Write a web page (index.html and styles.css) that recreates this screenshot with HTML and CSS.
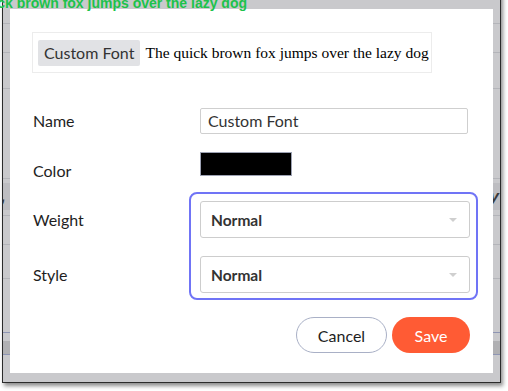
FILE: index.html
```html
<!DOCTYPE html>
<html>
<head>
<meta charset="utf-8">
<link rel="stylesheet" href="styles.css">
</head>
<body>
<div class="banner">quick brown fox jumps over the lazy dog</div>
<div class="frame">
  <div class="page">
    <div class="prow r1"></div>
    <div class="prow r2"></div>
    <div class="prow r3"></div>
    <div class="prow r4"></div>
    <div class="pgap g4"></div>
    <div class="pblock b1"><span class="pcomma">,</span><span class="py">y</span></div>
    <div class="prow r5"></div>
    <div class="prow r6"></div>
    <div class="prow r7"></div>
    <div class="prow r8 blue"></div>
    <div class="pgap g8"></div>
    <div class="pblock b2"></div>
    <div class="prow r9 blue"></div>
  </div>
  <div class="modal">
    <div class="preview">
      <span class="chip">Custom Font</span>
      <span class="sample">The quick brown fox jumps over the lazy dog</span>
    </div>
    <div class="form">
      <div class="row name-row">
        <label class="label">Name</label>
        <div class="input">Custom Font</div>
      </div>
      <div class="row color-row">
        <label class="label color-label">Color</label>
        <div class="swatch"></div>
      </div>
      <div class="group">
        <div class="group-labels">
          <label class="label glabel">Weight</label>
          <label class="label glabel">Style</label>
        </div>
        <div class="ring">
          <div class="select"><span>Normal</span><span class="caret"></span></div>
          <div class="select"><span>Normal</span><span class="caret"></span></div>
        </div>
      </div>
      <div class="actions">
        <button class="btn cancel">Cancel</button>
        <button class="btn save">Save</button>
      </div>
    </div>
  </div>
</div>
</body>
</html>
```
FILE: styles.css
```css
html, body {
  margin: 0;
  padding: 0;
  background: #ffffff;
  overflow: hidden;
  width: 508px;
  height: 391px;
}

.banner {
  position: absolute;
  top: -4px;
  left: -200px;
  width: 447px;
  text-align: right;
  white-space: nowrap;
  font-family: "Liberation Sans", Arial, sans-serif;
  font-weight: bold;
  font-size: 14px;
  line-height: 14px;
  color: #1cc24b;
  z-index: 5;
}

.frame {
  position: relative;
  margin-left: 2px;
  margin-top: -10px;
  width: 497px;
  height: 391px;
  border: 1px solid #2b2b2b;
  background: #c9c9cc;
  box-shadow: 2px 3px 4px rgba(0, 0, 0, 0.45);
  overflow: hidden;
}

.page {
  display: flex;
  flex-direction: column;
}

.prow {
  border-bottom: 1px solid #b3b4b9;
}
.prow.blue { border-bottom-color: #8e95b3; }
.r1 { height: 32px; }
.r2 { height: 28px; }
.r3 { height: 35px; }
.r4 { height: 89px; }
.g4 { height: 4px; }
.pblock {
  display: flex;
  justify-content: space-between;
  align-items: center;
  font-family: "Liberation Sans", Arial, sans-serif;
  font-weight: bold;
  font-style: italic;
  font-size: 17px;
  color: #3a3a3a;
  padding: 0 1px 0 0;
}
.b1 { height: 27px; background: #bdbdc1; }
.pcomma { margin-left: -2px; }
.r5 { height: 5px; }
.r6 { height: 28px; }
.r7 { height: 33px; }
.r8 { height: 53px; }
.g8 { height: 8px; }
.b2 { height: 13px; background: #b0b0b3; }
.r9 { height: 0; }

.modal {
  position: absolute;
  left: 7px;
  top: 18px;
  width: 483px;
  height: 364px;
  background: #ffffff;
  box-sizing: border-box;
  padding: 23px 23px 0 22px;
  font-family: Lato, "Open Sans", sans-serif;
  color: #222;
}

.preview {
  width: 400px;
  height: 41px;
  box-sizing: border-box;
  border: 1px solid #ececec;
  display: flex;
  align-items: center;
  padding: 0 5px;
  white-space: nowrap;
  overflow: visible;
}

.chip {
  flex-shrink: 0;
  background: #e1e2e5;
  border-radius: 2px;
  height: 26px;
  line-height: 26px;
  padding: 0 6px;
  font-size: 16px;
  color: #333;
}

.sample {
  flex-shrink: 0;
  margin-left: 5px;
  font-family: "Liberation Serif", "Times New Roman", serif;
  font-size: 15.5px;
  color: #000;
}

.form {
  padding-left: 1px;
}

.row {
  display: flex;
  align-items: center;
}

.label {
  width: 167px;
  flex-shrink: 0;
  font-size: 16px;
  line-height: 18px;
  color: #1e1e1e;
}

.name-row {
  margin-top: 35px;
  height: 26px;
}

.input {
  width: 268px;
  flex-shrink: 0;
  height: 26px;
  box-sizing: border-box;
  border: 1px solid #cfcfcf;
  border-radius: 2px;
  padding-left: 7px;
  font-size: 16px;
  line-height: 24px;
  color: #333;
}

.color-row {
  margin-top: 18px;
  height: 24px;
  align-items: flex-start;
}
.color-label { margin-top: 10px; }

.swatch {
  width: 92px;
  flex-shrink: 0;
  height: 24px;
  box-sizing: border-box;
  background: #000;
  border: 1px solid #9da2b3;
}

.group {
  display: flex;
  margin-top: 16px;
}

.group-labels {
  width: 156px;
  flex-shrink: 0;
  padding-top: 9px;
  display: flex;
  flex-direction: column;
  gap: 18px;
}
.glabel {
  width: auto;
  height: 37px;
  display: flex;
  align-items: center;
}

.ring {
  width: 289px;
  flex-shrink: 0;
  box-sizing: border-box;
  border: 2px solid #7074f6;
  border-radius: 8px;
  padding: 7px 6px 5px 9px;
  display: flex;
  flex-direction: column;
  gap: 18px;
}

.select {
  height: 37px;
  box-sizing: border-box;
  border: 1px solid #cdcdcd;
  border-radius: 3px;
  display: flex;
  align-items: center;
  justify-content: space-between;
  padding: 0 12px 0 10px;
  font-size: 15.5px;
  font-weight: bold;
  color: #333;
}

.caret {
  width: 0;
  height: 0;
  border-left: 4px solid transparent;
  border-right: 4px solid transparent;
  border-top: 4px solid #cfcfcf;
}

.actions {
  display: flex;
  justify-content: flex-end;
  gap: 5px;
  margin-top: 17px;
}

.btn {
  height: 36px;
  border-radius: 18px;
  font-family: Lato, "Open Sans", sans-serif;
  font-size: 16px;
  padding: 0;
  box-sizing: border-box;
}
.cancel {
  width: 91px;
  background: #fff;
  border: 1px solid #a9b0c6;
  color: #1e1e1e;
}
.save {
  width: 78px;
  background: #ff5b34;
  border: none;
  color: #fff;
}
```
